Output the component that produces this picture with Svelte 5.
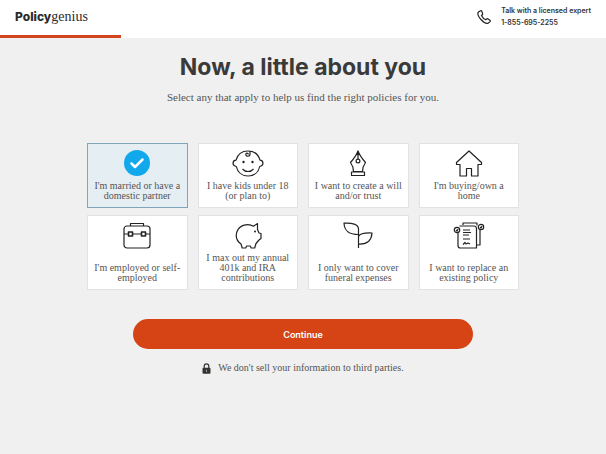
<script lang="ts">
	type Option = { id: string; label: string };

	const options: Option[] = [
		{ id: 'married', label: "I'm married or have a domestic partner" },
		{ id: 'kids', label: 'I have kids under 18 (or plan to)' },
		{ id: 'will', label: 'I want to create a will and/or trust' },
		{ id: 'home', label: "I'm buying/own a home" },
		{ id: 'employed', label: "I'm employed or self-employed" },
		{ id: 'retirement', label: 'I max out my annual 401k and IRA contributions' },
		{ id: 'funeral', label: 'I only want to cover funeral expenses' },
		{ id: 'replace', label: 'I want to replace an existing policy' }
	];

	let selected = $state<string[]>(['married']);
	let progress = $state(20);
</script>

<header class="site-header">
	<div class="header-row">
		<a href="/" class="logo"><strong>Policy</strong><span>genius</span></a>
		<a href="tel:18556952255" class="contact">
			<svg class="phone" viewBox="0 0 14 14" aria-hidden="true">
				<path d="M3.6.8 1.5 2C.2 3.1 1 6.1 3.5 9c2.8 3.1 6.1 4.8 7.6 4.2l1.9-1.6c.5-.5.4-1-.1-1.4l-1.800-1.300c-.5-.3-1-.3-1.400.1l-.9.8C7.200 9.200 5.400 7.400 4.500 5.500l.8-.7c.4-.4.5-.8.3-1.300l-.8-2.200C4.600.7 4.100.5 3.600.8Z" />
			</svg>
			<span class="contact-text">Talk with a licensed expert<br />1-855-695-2255</span>
		</a>
	</div>
	<div class="progress" role="progressbar" aria-label="Progress" aria-valuenow={progress} aria-valuemin="0" aria-valuemax="100">
		<div class="progress-bar" style="width: {progress}%"></div>
	</div>
</header>

<main class="page">
	<h1>Now, a little about you</h1>
	<p class="intro">Select any that apply to help us find the right policies for you.</p>

	<form onsubmit={(event) => event.preventDefault()}>
		<div class="options">
			{#each options as option (option.id)}
				<label class="card" class:selected={selected.includes(option.id)}>
					<input type="checkbox" value={option.id} bind:group={selected} />
					<svg class="icon" viewBox="0 0 34 28" aria-hidden="true">
						{#if selected.includes(option.id)}
							<circle class="check-circle" cx="17" cy="13" r="13" />
							<path class="check" d="m11.500 13.500 3.500 3.500 7.500-7.500" />
						{:else if option.id === 'kids'}
							<path d="M5 10.200C6.500 4.500 11 1 17 1s10.500 3.500 12 9.200c4 .4 4 5.800-.3 6.300C27.500 22.200 23 26 17 26S6.500 22.200 5.300 16.500C1 16 1 10.600 5 10.200Z" />
							<path d="M19 1.300v3c0 2.600-4.200 2.500-4.200.2 0-1.700 2.500-1.800 2.500-.1M11.500 19c2.800 3.300 8.200 3.300 11 0" />
							<circle class="dot" cx="12.500" cy="12" r="1.200" />
							<circle class="dot" cx="21.500" cy="12" r="1.200" />
						{:else if option.id === 'will'}
							<path d="M17 1c-1.500 4.500-4.500 8-7.500 11.500 2 2.700 3 5.500 3 9h9c0-3.500 1-6.300 3-9C21.500 9 18.500 5.500 17 1ZM10.500 22h13v3.500h-13ZM17 2v7" />
							<path class="dot" d="M17 0c-.4 2-1 3.400-2 5h4c-1-1.600-1.600-3-2-5Z" />
							<circle cx="17" cy="11" r="1.900" />
						{:else if option.id === 'home'}
							<path d="M17 1 4.500 12.500v2H8V26h6.500v-7.500h5V26H26V14.500h3.500v-2Z" />
						{:else if option.id === 'employed'}
							<rect x="4" y="4" width="26" height="22" rx="3" />
							<path d="M10.500 4V1.500h13V4M4 12h4.500m4 0h9m4 0H30" />
							<rect class="buckle" x="8.500" y="10" width="4" height="4" />
							<rect class="buckle" x="21.500" y="10" width="4" height="4" />
						{:else if option.id === 'retirement'}
							<path d="M22.500 4.200C17 1 8.500 2.800 6 9.500c-1.800 5 .2 9.700 4 12.500l1.200 4h3.500l1-2h3.500l1 2h3.500l1.300-4.500 3-3.500 2-1.500v-5l-2-.5-1.500-3.500V1.500Z" />
							<circle class="dot" cx="24" cy="9.500" r="1" />
						{:else if option.id === 'funeral'}
							<path d="M17.500 26V7C17.500 2 11 .8 3 1.200 3.500 9 7.500 12.500 17.500 12.500M17.500 22c8.500.5 13-3 13.500-11-7-.3-12 .2-13.500 3.500" />
						{:else}
							<path d="M11 3V1h14v2.500M28 8v15h-3M7.500 4H22c2 0 2.500 1 2.500 3v19H8.500c-1.800 0-2.500-1-2.500-2.500V11M11 8h7m-7 2.500h8M11 13h6m-6 4h7m-7 5.500 2-2 1 1.500 2-1 2 1" />
							<circle class="seal" cx="5" cy="8" r="2.700" />
							<circle class="seal" cx="29" cy="5" r="2.700" />
							<path d="m4 8 1 1 1-2m22-2 1 1 1-2" />
						{/if}
					</svg>
					<span class="card-label">{option.label}</span>
				</label>
			{/each}
		</div>

		<button type="submit" class="continue">Continue</button>
	</form>

	<p class="privacy">
		<svg class="lock" viewBox="0 0 9 11" aria-hidden="true">
			<path class="shackle" d="M2.200 5V3.200c0-3.200 4.600-3.200 4.600 0V5" />
			<rect x="0.500" y="4.800" width="8" height="6" rx="1" />
			<path class="keyhole" d="M4.500 6.800v2" />
		</svg>
		We don't sell your information to third parties.
	</p>
</main>

<style>
	:global(body) {
		background: #f0f0f0;
		color: #333;
	}

	.site-header {
		background: #fff;
		font-family: Inter, sans-serif;
	}

	.header-row {
		display: flex;
		align-items: center;
		justify-content: space-between;
		height: 35px;
		padding: 0 15px 2px;
		box-sizing: border-box;
	}

	.logo {
		color: #2b2b2b;
		font-size: 12px;
		line-height: 16px;
		text-decoration: none;
	}

	.logo strong {
		font-weight: 800;
	}

	.logo span {
		font-family: 'Liberation Serif', serif;
		font-size: 14px;
	}

	.contact {
		display: flex;
		align-items: center;
		gap: 10px;
		color: #333;
		text-decoration: none;
	}

	.contact-text {
		font-size: 7px;
		font-weight: 600;
		line-height: 12px;
	}

	.phone {
		width: 14px;
		height: 14px;
		fill: none;
		stroke: #222;
		stroke-width: 1.2;
	}

	.progress {
		height: 3px;
	}

	.progress-bar {
		height: 100%;
		background: #d2451e;
	}

	.page {
		max-width: 432px;
		margin: 0 auto;
		padding: 14px 16px;
		text-align: center;
		font-family: 'Liberation Serif', serif;
	}

	h1 {
		margin: 0;
		font-family: Inter, sans-serif;
		font-size: 23px;
		font-weight: 700;
		line-height: 30px;
		color: #3a3a3a;
	}

	.intro {
		margin: 7px 0 38px;
		font-size: 11px;
		line-height: 16px;
		color: #555;
	}

	.options {
		display: grid;
		grid-template-columns: repeat(4, 1fr);
		gap: 7px 10px;
	}

	.card {
		position: relative;
		display: flex;
		flex-direction: column;
		align-items: center;
		padding: 6px 4px;
		background: #fff;
		border: 1px solid #e2e2e2;
		cursor: pointer;
	}

	.card.selected {
		background: #e5eef2;
		border-color: #7fa6b8;
	}

	.card input {
		position: absolute;
		inset: 0;
		width: 100%;
		height: 100%;
		margin: 0;
		opacity: 0;
		cursor: pointer;
	}

	.icon {
		width: 34px;
		height: 28px;
		margin-bottom: 3px;
		fill: none;
		stroke: #222;
		stroke-width: 1.2;
		stroke-linejoin: round;
	}

	.icon .check-circle {
		fill: #12a9ec;
		stroke: none;
	}

	.icon .check {
		stroke: #fff;
		stroke-width: 2.5;
		stroke-linecap: round;
	}

	.icon .dot {
		fill: #222;
		stroke: none;
	}

	.icon .buckle {
		stroke-width: 1.6;
	}

	.icon .seal {
		fill: #fff;
	}

	.card-label {
		margin-top: auto;
		font-size: 10px;
		line-height: 10px;
		color: #555;
	}

	.continue {
		display: block;
		width: 340px;
		max-width: 100%;
		height: 30px;
		margin: 29px auto 0;
		border: 0;
		border-radius: 15px;
		background: #d64415;
		color: #fff;
		font-family: Inter, sans-serif;
		font-size: 9px;
		font-weight: 600;
		cursor: pointer;
	}

	.privacy {
		display: flex;
		align-items: center;
		justify-content: center;
		gap: 7px;
		margin: 11px 0 0;
		font-size: 10px;
		line-height: 16px;
		color: #555;
	}

	.lock {
		width: 9px;
		height: 11px;
		fill: #333;
	}

	.shackle {
		fill: none;
		stroke: #333;
		stroke-width: 1.2;
	}

	.keyhole {
		stroke: #aaa;
	}
</style>
